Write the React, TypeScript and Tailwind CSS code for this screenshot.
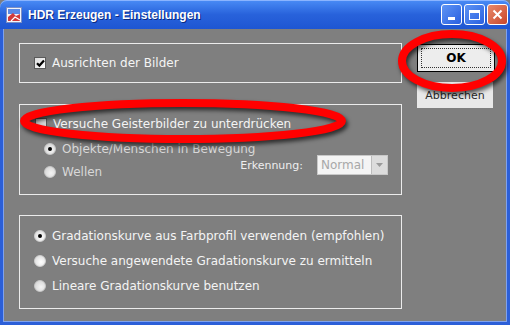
import React from "react";

const Check = ({ checked, disabled }: { checked?: boolean; disabled?: boolean }) => (
  <div
    className={`w-[12px] h-[12px] border border-[#5a5a5a] flex items-center justify-center shrink-0 ${
      disabled ? "bg-[#d9d9d9]" : "bg-gradient-to-br from-[#dcdcdc] to-white"
    }`}
  >
    {checked && (
      <svg width="9" height="9" viewBox="0 0 9 9">
        <path d="M1 4.2 L3.4 6.6 L8 1.6" stroke="#000" strokeWidth="2.2" fill="none" />
      </svg>
    )}
  </div>
);

const Radio = ({ selected, dim }: { selected?: boolean; dim?: boolean }) => (
  <div
    className={`w-[12px] h-[12px] rounded-full border flex items-center justify-center shrink-0 ${
      dim
        ? "border-[#c8c8c8] bg-[radial-gradient(circle_at_60%_60%,#f4f4f4,#cfcfcf)]"
        : "border-[#d0d0d0] bg-[radial-gradient(circle_at_60%_60%,#ffffff,#d6d6d6)]"
    }`}
  >
    {selected && <div className="w-[4px] h-[4px] rounded-full bg-black" />}
  </div>
);

const Group = ({ className, children }: { className: string; children: React.ReactNode }) => (
  <div className={`border border-[#ececec] ${className}`}>{children}</div>
);

export default function App() {
  return (
    <div className="w-[510px] h-[325px] relative overflow-hidden bg-[#7f7f7f] font-['DejaVu_Sans',sans-serif] text-[12px] leading-none whitespace-nowrap">
      {/* Title bar */}
      <div className="h-[29px] rounded-t-[7px] bg-gradient-to-b from-[#4a8cf6] via-[#2862db] to-[#1e56d2] flex items-center pl-[6px] pr-[2px] shadow-[inset_0_1px_0_#8ab4ff]">
        <svg width="16" height="16" viewBox="0 0 16 16" className="shrink-0">
          <rect x="0.5" y="0.5" width="15" height="15" fill="#f2f4fa" stroke="#7d8fc4" />
          <rect x="2" y="2" width="12" height="5" fill="#5b8ae6" />
          <path d="M2 10 L7 6 L10 9 L14 7 L14 14 L2 14 Z" fill="#d33a3a" />
          <path d="M5 14 L9 10 L14 13" stroke="#fff" strokeWidth="1.2" fill="none" />
        </svg>
        <span className="ml-[6px] text-white font-bold text-[12px] font-['Liberation_Sans',Arial,sans-serif] [text-shadow:1px_1px_0_#0a2a80]">
          HDR Erzeugen - Einstellungen
        </span>
        <div className="ml-auto flex gap-[2px] items-center">
          <div className="w-[21px] h-[21px] rounded-[3px] border border-white bg-gradient-to-br from-[#5f94f4] to-[#2a5fe0] flex items-end justify-center pb-[4px]">
            <div className="w-[7px] h-[3px] bg-white" />
          </div>
          <div className="w-[21px] h-[21px] rounded-[3px] border border-white bg-gradient-to-br from-[#5f94f4] to-[#2a5fe0] flex items-center justify-center">
            <div className="w-[11px] h-[10px] border border-white border-t-[3px]" />
          </div>
          <div className="w-[21px] h-[21px] rounded-[3px] border border-white bg-gradient-to-br from-[#e8896a] to-[#c8452a] flex items-center justify-center">
            <svg width="11" height="11" viewBox="0 0 11 11">
              <path d="M1.5 1.5 L9.5 9.5 M9.5 1.5 L1.5 9.5" stroke="#fff" strokeWidth="2" />
            </svg>
          </div>
        </div>
      </div>

      {/* Body frame */}
      <div className="h-[296px] bg-[#2c5fd8] px-[3px] pb-[3px] pt-0">
        <div className="h-full border border-[#7fa2ee] border-t-0 bg-[#7f7f7f] flex pl-[15px] pt-[14px] text-[#f4f4f4]">
          {/* Left groups */}
          <div className="w-[383px] flex flex-col">
            <Group className="h-[40px] flex items-center pl-[14px]">
              <Check checked />
              <span className="ml-[6px]">Ausrichten der Bilder</span>
            </Group>

            <Group className="mt-[21px] h-[91px] flex flex-col pt-[8px]">
              <div className="h-[22px] flex items-center pl-[15px]">
                <Check disabled />
                <span className="ml-[6px]">Versuche Geisterbilder zu unterdrücken</span>
              </div>
              <div className="h-[23px] mt-[2px] flex items-center pl-[24px]">
                <Radio selected dim />
                <span className="ml-[6px] text-[#d8d8d8]">Objekte/Menschen in Bewegung</span>
              </div>
              <div className="h-[23px] flex items-start pl-[24px]">
                <div className="h-[23px] flex items-center">
                  <Radio dim />
                  <span className="ml-[6px] text-[#d8d8d8]">Wellen</span>
                </div>
                <div className="ml-auto mr-[13px] -mt-[5px] flex items-center">
                  <span className="text-[11px] text-[#eeeeee]">Erkennung:</span>
                  <div className="ml-[14px] w-[71px] h-[20px] bg-[#f4f4f4] border border-[#c8c8c8] flex items-center">
                    <span className="pl-[3px] text-[#a8a8a8] text-[12px]">Normal</span>
                    <div className="ml-auto w-[16px] h-[18px] bg-[#dcdcdc] border-l border-[#bcbcbc] flex items-center justify-center">
                      <svg width="7" height="4" viewBox="0 0 7 4">
                        <path d="M0 0 L7 0 L3.5 4 Z" fill="#9a9a9a" />
                      </svg>
                    </div>
                  </div>
                </div>
              </div>
            </Group>

            <Group className="mt-[20px] h-[94px] flex flex-col justify-center pl-[14px] pb-[2px]">
              <div className="h-[25px] flex items-center">
                <Radio selected />
                <span className="ml-[6px]">Gradationskurve aus Farbprofil verwenden (empfohlen)</span>
              </div>
              <div className="h-[25px] flex items-center">
                <Radio />
                <span className="ml-[6px]">Versuche angewendete Gradationskurve zu ermitteln</span>
              </div>
              <div className="h-[25px] flex items-center">
                <Radio dim />
                <span className="ml-[6px]">Lineare Gradationskurve benutzen</span>
              </div>
            </Group>
          </div>

          {/* Right buttons */}
          <div className="ml-[15px] flex flex-col pt-[1px]">
            <div className="w-[78px] h-[28px] bg-[#ededed] border border-black p-[3px]">
              <div className="w-full h-full border border-dotted border-[#333] flex items-center justify-center font-bold text-black text-[12px]">
                OK
              </div>
            </div>
            <div className="mt-[10px] w-[76px] h-[26px] bg-[#e8e8e8] flex items-center justify-center text-[#2a2a2a] text-[11px]">
              Abbrechen
            </div>
          </div>
        </div>
      </div>

      {/* Red annotation ellipses */}
      <svg
        className="absolute left-0 top-0 pointer-events-none drop-shadow-[2px_3px_2px_rgba(0,0,0,0.65)]"
        width="510"
        height="325"
        viewBox="0 0 510 325"
      >
        <ellipse cx="452" cy="61" rx="50" ry="27" fill="none" stroke="#ff0000" strokeWidth="8" />
        <ellipse cx="183" cy="121" rx="159" ry="18" fill="none" stroke="#ff0000" strokeWidth="8" />
      </svg>
    </div>
  );
}
